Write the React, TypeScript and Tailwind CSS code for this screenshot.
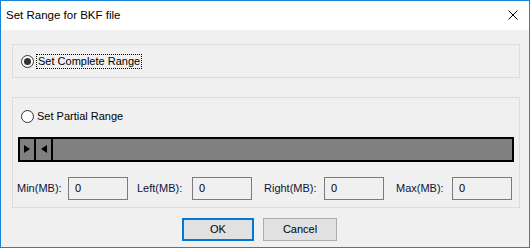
import React from 'react'

function Radio({checked}: {checked?: boolean}) {
  return (
    <span className="flex h-[13px] w-[13px] items-center justify-center rounded-full border border-[#333333] bg-white">
      {checked ? <span className="h-[7px] w-[7px] rounded-full bg-[#333333]" /> : null}
    </span>
  )
}

function Field({label, labelW, ml}: {label: string; labelW: string; ml: string}) {
  return (
    <div className={`flex items-center ${ml}`}>
      <span className={`${labelW} text-[11px] text-[#10103a]`}>{label}</span>
      <div className="flex h-[23px] w-[60px] items-center border border-[#7a7a7a] bg-[#f0f0f0] pl-[6px] text-[11px] text-black">
        0
      </div>
    </div>
  )
}

export default function App() {
  return (
    <div className="h-[250px] w-[531px] bg-white" style={{fontFamily: '"Liberation Sans", Arial, sans-serif'}}>
      <div className="flex h-[248px] w-[530px] flex-col border border-[#1883d7] bg-[#f0f0f0]">
        {/* title bar */}
        <div className="flex h-[29px] items-center justify-between bg-white pl-[5px] pr-[11px] text-[11.5px] text-black">
          <span>Set Range for BKF file</span>
          <svg width="10" height="10" viewBox="0 0 10 10" className="-mt-[2px]">
            <path d="M0.5 0.5L9.5 9.5M9.5 0.5L0.5 9.5" stroke="#000" strokeWidth="1" />
          </svg>
        </div>

        <div className="flex flex-col px-[11px] pt-[14px]">
          {/* complete range group */}
          <div className="flex h-[34px] w-[508px] items-center border border-[#dcdcdc] pl-[8px]">
            <Radio checked />
            <span className="ml-[2px] border border-dotted border-black px-px text-[11px] leading-[13px] text-black">
              Set Complete Range
            </span>
          </div>

          {/* partial range group */}
          <div className="mt-[19px] flex h-[111px] w-[508px] flex-col border border-[#dcdcdc] px-[4px]">
            <div className="mt-[10px] flex items-center pl-[4px]">
              <Radio />
              <span className="ml-[3px] text-[11px] text-black">Set Partial Range</span>
            </div>
            <div className="ml-px mt-[12px] flex h-[25px] w-[496px] border-2 border-black bg-[#808080]">
              <div className="flex w-[16px] items-center justify-center border-r-2 border-black">
                <svg width="6" height="8" viewBox="0 0 6 8">
                  <path d="M0 0L6 4L0 8Z" fill="#000" />
                </svg>
              </div>
              <div className="flex w-[17px] items-center justify-center border-r-2 border-black">
                <svg width="6" height="8" viewBox="0 0 6 8">
                  <path d="M6 0L0 4L6 8Z" fill="#000" />
                </svg>
              </div>
            </div>
            <div className="mt-[15px] flex items-center">
              <Field label="Min(MB):" labelW="w-[51px]" ml="" />
              <Field label="Left(MB):" labelW="w-[55px]" ml="ml-[9px]" />
              <Field label="Right(MB):" labelW="w-[60px]" ml="ml-[12px]" />
              <Field label="Max(MB):" labelW="w-[56px]" ml="ml-[12px]" />
            </div>
          </div>

          {/* buttons */}
          <div className="mt-[10px] flex pl-[170px]">
            <button className="h-[23px] w-[72px] border-2 border-[#0078d7] bg-[#e1e1e1] text-[11px] text-black">
              OK
            </button>
            <button className="ml-[9px] h-[23px] w-[74px] border border-[#adadad] bg-[#e1e1e1] text-[11px] text-black">
              Cancel
            </button>
          </div>
        </div>
      </div>
    </div>
  )
}
